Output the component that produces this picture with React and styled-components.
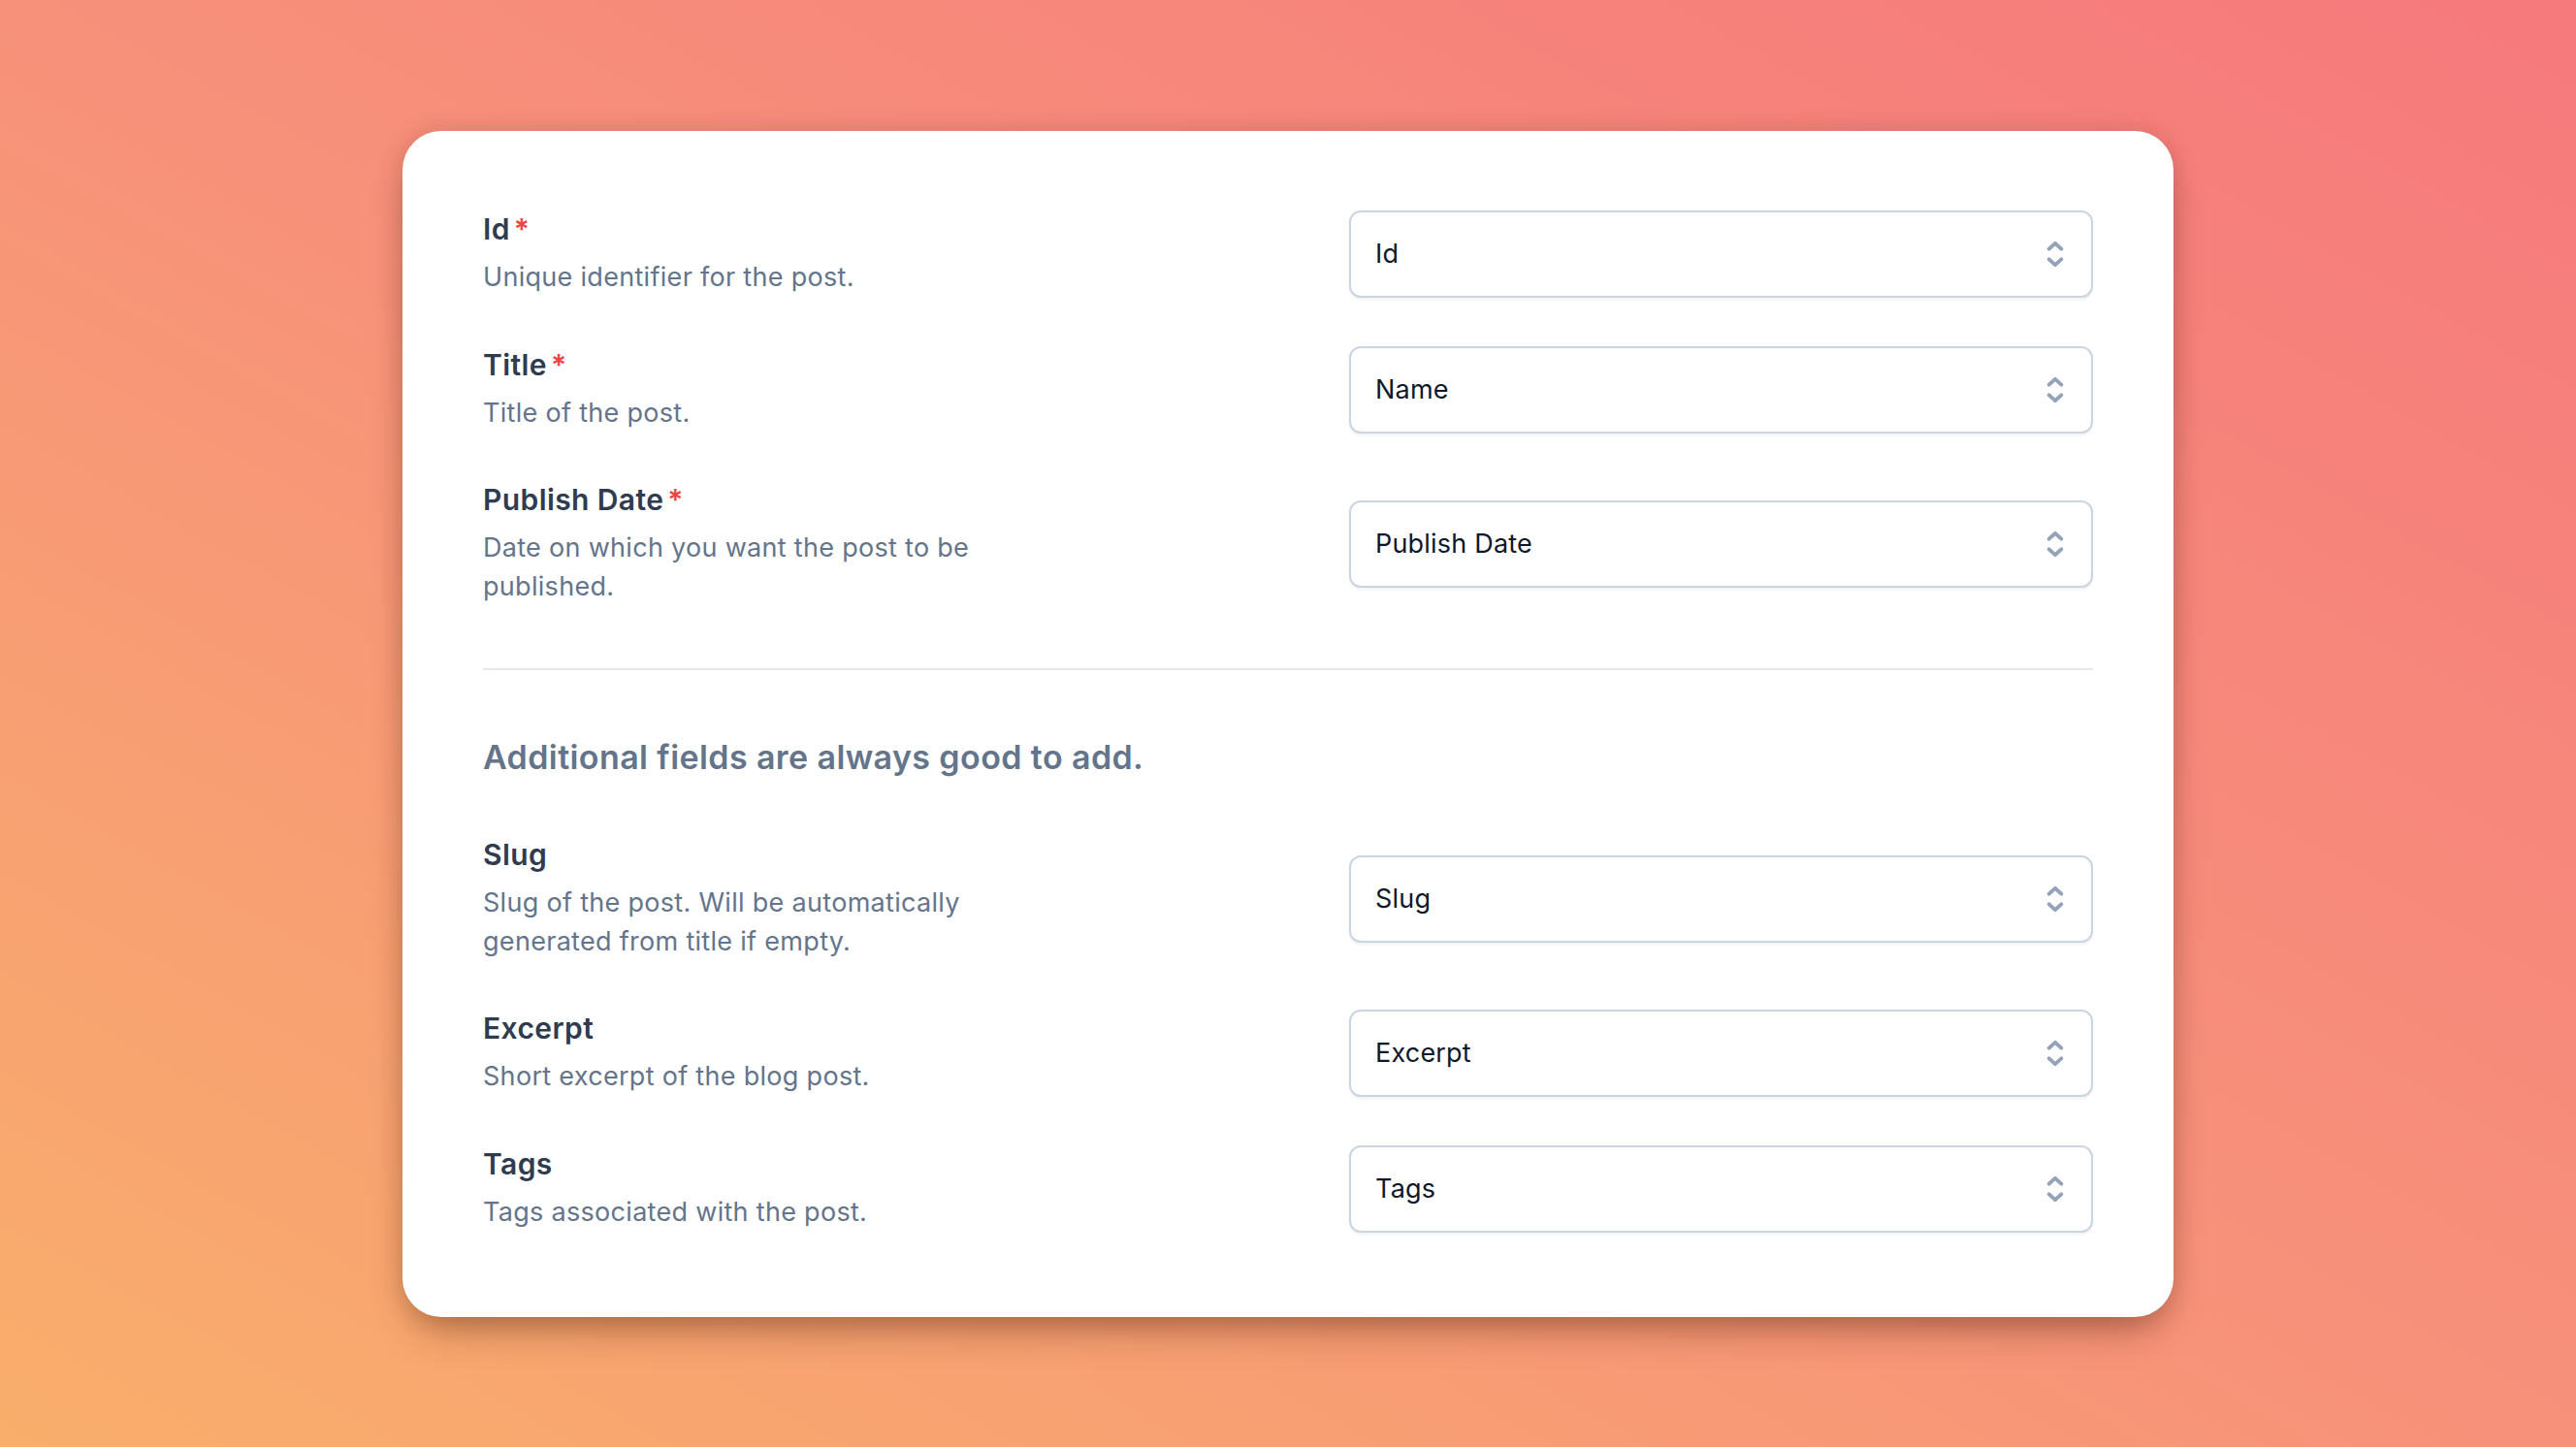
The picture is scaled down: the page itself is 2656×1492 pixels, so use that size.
import styled, { createGlobalStyle } from 'styled-components';

const GlobalStyle = createGlobalStyle`
  html, body {
    margin: 0;
    padding: 0;
  }
  body {
    font-family: Inter, "Noto Sans", sans-serif;
    -webkit-font-smoothing: antialiased;
  }
  * {
    box-sizing: border-box;
  }
`;

const Page = styled.div`
  width: 100vw;
  height: 100vh;
  display: flex;
  align-items: center;
  justify-content: center;
  background: linear-gradient(to top right, #f9ae6b 0%, #f7917a 50%, #f6797c 100%);
`;

const Card = styled.div`
  width: 1826px;
  padding: 77px 83px 87px;
  background: #fff;
  border-radius: 40px;
  box-shadow: 0 22px 40px -12px rgba(60, 20, 0, 0.4), 0 0 26px rgba(60, 20, 0, 0.14);
`;

const Fields = styled.div`
  display: flex;
  flex-direction: column;
  gap: 45px;
`;

const Row = styled.div`
  display: grid;
  grid-template-columns: 1fr 767px;
  align-items: center;
`;

const Info = styled.div`
  display: flex;
  flex-direction: column;
  gap: 7px;
`;

const Label = styled.label`
  font-size: 30px;
  line-height: 46px;
  font-weight: 600;
  letter-spacing: 0.4px;
  color: #2f3b4f;
`;

const Required = styled.span`
  color: #ef4444;
  margin-left: 4px;
`;

const Hint = styled.p`
  margin: 0;
  max-width: 560px;
  font-size: 27px;
  line-height: 40px;
  letter-spacing: 0.3px;
  color: #64748b;
`;

const Select = styled.button`
  display: flex;
  align-items: center;
  justify-content: space-between;
  height: 90px;
  width: 100%;
  margin-top: 5px;
  padding: 0 19px 0 25px;
  background: #fff;
  border: 2px solid #cbd5e1;
  border-radius: 12px;
  box-shadow: 0 2px 3px rgba(15, 23, 42, 0.06);
  font-family: inherit;
  font-size: 27px;
  letter-spacing: 0.2px;
  color: #0f172a;
  text-align: left;
  cursor: pointer;
`;

const Divider = styled.hr`
  margin: 64px 0 0;
  border: 0;
  height: 2px;
  background: #e2e8f0;
`;

const SectionTitle = styled.h2`
  margin: 68px 0 55px;
  font-size: 34px;
  line-height: 44px;
  font-weight: 600;
  letter-spacing: 0.4px;
  color: #64748b;
`;

// thick up/down chevrons of the select trigger
const UpDownIcon = () => (
  <svg
    width="36"
    height="36"
    viewBox="0 0 20 20"
    fill="none"
    stroke="#94a3b8"
    strokeWidth="2.2"
    strokeLinecap="round"
    strokeLinejoin="round"
    aria-hidden="true"
  >
    <path d="M6.5 7 L10 3.8 L13.5 7" />
    <path d="M6.5 13 L10 16.2 L13.5 13" />
  </svg>
);

const required = [
  { label: 'Id', hint: 'Unique identifier for the post.', value: 'Id' },
  { label: 'Title', hint: 'Title of the post.', value: 'Name' },
  { label: 'Publish Date', hint: 'Date on which you want the post to be published.', value: 'Publish Date' },
];

const optional = [
  { label: 'Slug', hint: 'Slug of the post. Will be automatically generated from title if empty.', value: 'Slug' },
  { label: 'Excerpt', hint: 'Short excerpt of the blog post.', value: 'Excerpt' },
  { label: 'Tags', hint: 'Tags associated with the post.', value: 'Tags' },
];

const Field = ({ label, hint, value, isRequired }) => (
  <Row>
    <Info>
      <Label>
        {label}
        {isRequired && <Required>*</Required>}
      </Label>
      <Hint>{hint}</Hint>
    </Info>
    <Select type="button">
      <span>{value}</span>
      <UpDownIcon />
    </Select>
  </Row>
);

const App = () => (
  <>
    <GlobalStyle />
    <Page>
      <Card>
        <Fields>
          {required.map(f => <Field key={f.label} {...f} isRequired />)}
        </Fields>
        <Divider />
        <SectionTitle>Additional fields are always good to add.</SectionTitle>
        <Fields>
          {optional.map(f => <Field key={f.label} {...f} />)}
        </Fields>
      </Card>
    </Page>
  </>
);

export default App;
